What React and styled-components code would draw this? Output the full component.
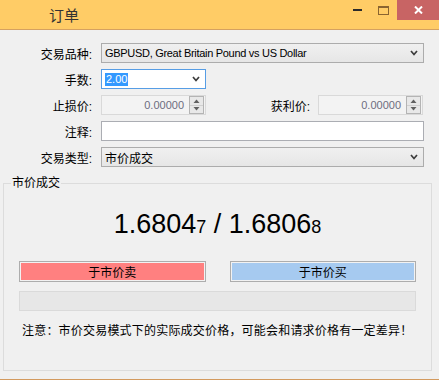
import React from "react";
import styled, { createGlobalStyle } from "styled-components";

const Global = createGlobalStyle`
  html, body { margin: 0; padding: 0; background: #f0f0f0; }
  * { box-sizing: border-box; }
`;

const Window = styled.div`
  width: 439px;
  height: 380px;
  display: flex;
  flex-direction: column;
  background: #f0f0f0;
  border-bottom: 1px solid #d39a5e;
  font-family: "Liberation Sans", "Noto Sans CJK SC", sans-serif;
  color: #000;
`;

const TitleBar = styled.div`
  height: 30px;
  flex: none;
  display: flex;
  align-items: flex-start;
  background: #ffcc66;
  border-bottom: 1px solid #d5a160;
`;

const Title = styled.div`
  padding-left: 49px;
  font-family: "Noto Sans CJK SC", sans-serif;
  font-size: 15px;
  line-height: 29px;
  color: #333;
`;

const Controls = styled.div`
  margin-left: auto;
  display: flex;
`;

const CtrlButton = styled.div`
  width: ${(p) => p.$w}px;
  height: 20px;
  display: flex;
  align-items: center;
  justify-content: center;
  background: ${(p) => p.$bg || "transparent"};
`;

const Form = styled.div`
  flex: none;
  display: flex;
  flex-direction: column;
  gap: 6px;
  padding: 13px 15px 0 0;
`;

const Row = styled.div`
  display: flex;
  align-items: center;
  height: 20px;
`;

const Label = styled.div`
  flex: none;
  width: ${(p) => p.$w}px;
  margin-right: ${(p) => p.$gap}px;
  text-align: right;
  font-size: 12px;
  white-space: nowrap;
`;

const Select = styled.div`
  flex: 1;
  height: 20px;
  display: flex;
  align-items: center;
  padding: 0 5px 0 3px;
  border: 1px solid #acacac;
  background: linear-gradient(#f0f0f0, #e6e6e6);
  font-size: ${(p) => (p.$cjk ? 12 : 11)}px;
  letter-spacing: ${(p) => (p.$cjk ? 0 : -0.3)}px;
`;

const Chevron = styled.svg`
  margin-left: auto;
  flex: none;
`;

const Combo = styled.div`
  flex: none;
  width: 105px;
  height: 20px;
  display: flex;
  align-items: center;
  padding: 0 5px 0 3px;
  border: 1px solid #569de5;
  background: #fff;
  font-size: 11px;
`;

const Selected = styled.span`
  background: #3399ff;
  color: #fff;
  line-height: 13px;
  padding: 0 1px;
`;

const Spin = styled.div`
  flex: none;
  width: 105px;
  height: 20px;
  display: flex;
  align-items: center;
  padding: 0 1px 0 3px;
  border: 1px solid #d9d9d9;
  background: #f3f3f3;
  font-size: 11px;
`;

const SpinValue = styled.div`
  flex: 1;
  text-align: right;
  padding-right: 5px;
  color: #6d6d80;
`;

const SpinButtons = styled.div`
  flex: none;
  width: 15px;
  height: 18px;
  display: flex;
  flex-direction: column;
  border: 1px solid #b4b4b4;
  background: #e8e8e8;
`;

const SpinHalf = styled.div`
  flex: 1;
  display: flex;
  align-items: center;
  justify-content: center;
  border-top: ${(p) => (p.$bottom ? "1px solid #d0d0d0" : "none")};
`;

const Input = styled.div`
  flex: 1;
  height: 20px;
  border: 1px solid #abadb3;
  background: #fff;
`;

const Group = styled.fieldset`
  flex: 1;
  min-height: 0;
  margin: 9px 7px 8px 3px;
  padding: 0 15px;
  border: 1px solid #dcdcdc;
`;

const Legend = styled.legend`
  margin-left: -8px;
  padding: 0 1px;
  font-size: 12px;
  line-height: 14px;
`;

const Price = styled.div`
  margin-top: 19px;
  text-align: center;
  font-size: 27px;
  line-height: 30px;
`;

const Pip = styled.span`
  font-size: 18px;
`;

const Buttons = styled.div`
  display: flex;
  gap: 24px;
  margin-top: 19px;
`;

const TradeButton = styled.div`
  flex: 1;
  height: 21px;
  display: flex;
  align-items: center;
  justify-content: center;
  border: 1px solid #adadad;
  background: ${(p) => p.$bg};
  box-shadow: inset 0 0 0 1px #f2f2f2;
  font-size: 12px;
`;

const Progress = styled.div`
  margin-top: 9px;
  height: 20px;
  border: 1px solid #dadada;
  background: #e7e7e7;
`;

const Note = styled.div`
  margin-top: 11px;
  padding-left: 3px;
  font-size: 12px;
  line-height: 16px;
  letter-spacing: 0.2px;
  font-family: "Noto Sans CJK SC", sans-serif;
`;

const ChevronIcon = () => (
  <Chevron width="8" height="6" viewBox="0 0 8 6">
    <polyline points="1,1 4,4.5 7,1" fill="none" stroke="#3c3c3c" strokeWidth="1.7" />
  </Chevron>
);

const SpinBox = ({ value }) => (
  <Spin>
    <SpinValue>{value}</SpinValue>
    <SpinButtons>
      <SpinHalf>
        <svg width="7" height="4" viewBox="0 0 7 4">
          <polygon points="0.5,4 3.5,0.5 6.5,4" fill="#606060" />
        </svg>
      </SpinHalf>
      <SpinHalf $bottom>
        <svg width="7" height="4" viewBox="0 0 7 4">
          <polygon points="0.5,0 3.5,3.5 6.5,0" fill="#606060" />
        </svg>
      </SpinHalf>
    </SpinButtons>
  </Spin>
);

export default function App() {
  return (
    <>
      <Global />
      <Window>
        <TitleBar>
          <Title>订单</Title>
          <Controls>
            <CtrlButton $w={26}>
              <svg width="9" height="2" viewBox="0 0 9 2">
                <rect x="0" y="0" width="9" height="2" fill="#2b2b2b" />
              </svg>
            </CtrlButton>
            <CtrlButton $w={27}>
              <svg width="11" height="9" viewBox="0 0 11 9">
                <rect x="0.5" y="0.5" width="10" height="8" fill="none" stroke="#8a6430" strokeWidth="1" />
                <rect x="0.5" y="0.5" width="10" height="1.5" fill="#8a6430" />
              </svg>
            </CtrlButton>
            <CtrlButton $w={42} $bg="#c86464">
              <svg width="9" height="8" viewBox="0 0 9 8">
                <path d="M1 0.5 L8 7.5 M8 0.5 L1 7.5" stroke="#fff" strokeWidth="2" />
              </svg>
            </CtrlButton>
          </Controls>
        </TitleBar>

        <Form>
          <Row>
            <Label $w={92} $gap={9}>交易品种:</Label>
            <Select>
              GBPUSD, Great Britain Pound vs US Dollar
              <ChevronIcon />
            </Select>
          </Row>
          <Row>
            <Label $w={92} $gap={9}>手数:</Label>
            <Combo>
              <Selected>2.00</Selected>
              <ChevronIcon />
            </Combo>
          </Row>
          <Row>
            <Label $w={92} $gap={9}>止损价:</Label>
            <SpinBox value="0.00000" />
            <Label $w={104} $gap={8}>获利价:</Label>
            <SpinBox value="0.00000" />
          </Row>
          <Row>
            <Label $w={92} $gap={9}>注释:</Label>
            <Input />
          </Row>
          <Row>
            <Label $w={92} $gap={9}>交易类型:</Label>
            <Select $cjk>
              市价成交
              <ChevronIcon />
            </Select>
          </Row>
        </Form>

        <Group>
          <Legend>市价成交</Legend>
          <Price>
            1.6804<Pip>7</Pip> / 1.6806<Pip>8</Pip>
          </Price>
          <Buttons>
            <TradeButton $bg="#ff8080">于市价卖</TradeButton>
            <TradeButton $bg="#a6caf0">于市价买</TradeButton>
          </Buttons>
          <Progress />
          <Note>注意：市价交易模式下的实际成交价格，可能会和请求价格有一定差异！</Note>
        </Group>
      </Window>
    </>
  );
}
